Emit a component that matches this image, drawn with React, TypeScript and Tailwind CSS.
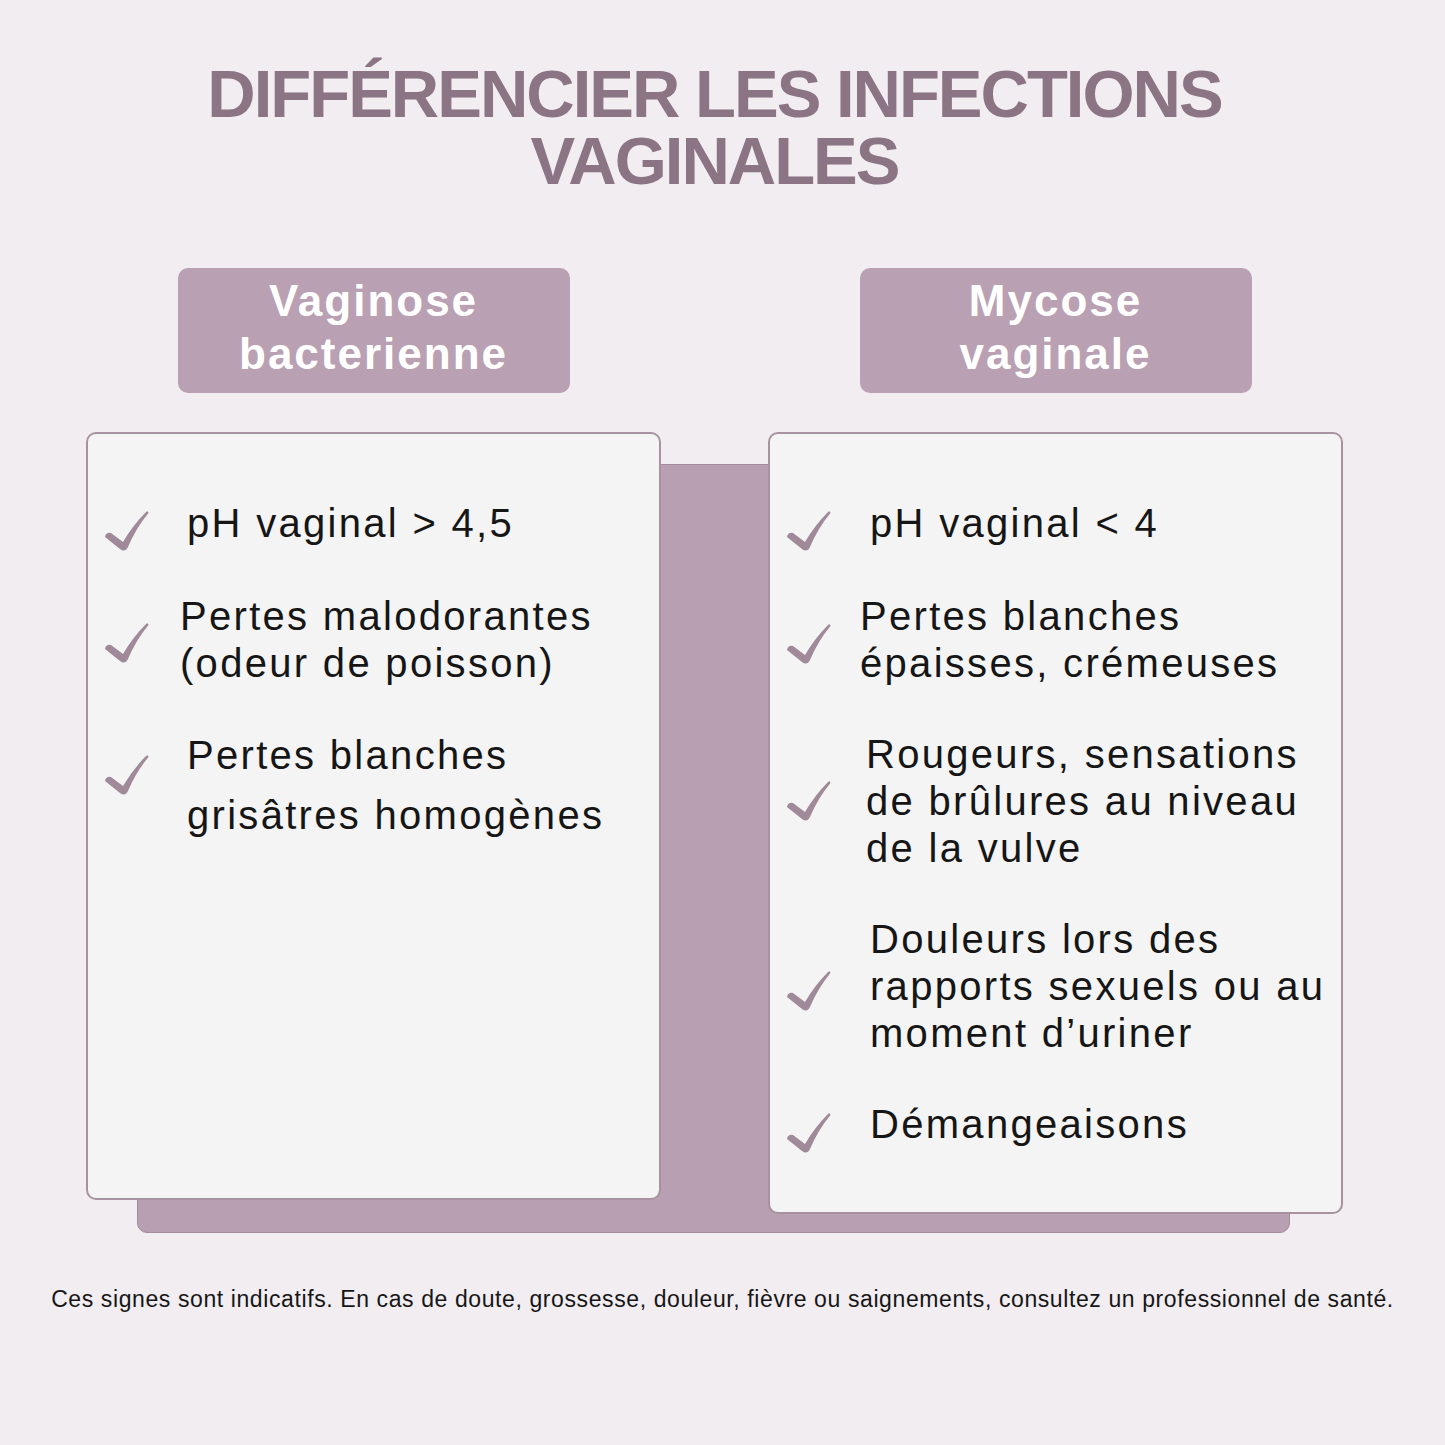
import React from "react";

/* ---------------- DATA ---------------- */

type Item = { lines: string[]; pl: string; mt: string; lh: string; ct: string };

const left: Item[] = [
  { lines: ["pH vaginal > 4,5"], pl: "pl-[99px]", mt: "mt-[65px]", lh: "leading-[47px]", ct: "top-[9px]" },
  { lines: ["Pertes malodorantes", "(odeur de poisson)"], pl: "pl-[92px]", mt: "mt-[46px]", lh: "leading-[47px]", ct: "top-[28px]" },
  { lines: ["Pertes blanches", "grisâtres homogènes"], pl: "pl-[99px]", mt: "mt-[38px]", lh: "leading-[60px]", ct: "top-[28px]" },
];

const right: Item[] = [
  { lines: ["pH vaginal < 4"], pl: "pl-[100px]", mt: "mt-[65px]", lh: "leading-[47px]", ct: "top-[9px]" },
  { lines: ["Pertes blanches", "épaisses, crémeuses"], pl: "pl-[90px]", mt: "mt-[46px]", lh: "leading-[47px]", ct: "top-[29px]" },
  { lines: ["Rougeurs, sensations", "de brûlures au niveau", "de la vulve"], pl: "pl-[96px]", mt: "mt-[44px]", lh: "leading-[47px]", ct: "top-[48px]" },
  { lines: ["Douleurs lors des", "rapports sexuels ou au", "moment d’uriner"], pl: "pl-[100px]", mt: "mt-[44px]", lh: "leading-[47px]", ct: "top-[53px]" },
  { lines: ["Démangeaisons"], pl: "pl-[100px]", mt: "mt-[44px]", lh: "leading-[47px]", ct: "top-[10px]" },
];

/* ---------------- PARTS ---------------- */

const Check = () => (
  <svg width="46" height="42" viewBox="0 0 44 42">
    <path
      d="M0 28 Q1 23 6 24 L18 33 Q28 16 41 3 Q43 1 43.5 4 Q31 19 23 38 Q20 44 15 40 Z"
      fill="#a08a99"
    />
  </svg>
);

const Row = ({ item }: { item: Item }) => (
  <div className={`relative ${item.mt} ${item.pl}`}>
    <div className={`absolute left-[16px] ${item.ct}`}>
      <Check />
    </div>
    <p className={`text-[40px] ${item.lh} tracking-[2.3px] text-[#161616]`}>
      {item.lines.map((l, i) => (
        <span key={i} className="block">
          {l}
        </span>
      ))}
    </p>
  </div>
);

const Pill = ({ a, b }: { a: string; b: string }) => (
  <div className="mx-auto w-[392px] h-[125px] pb-[8px] rounded-[10px] bg-[#b9a0b3] flex flex-col items-center justify-center text-white font-bold text-[44px] leading-[53px] tracking-[2px]">
    <span>{a}</span>
    <span>{b}</span>
  </div>
);

/* ---------------- COMPONENT ---------------- */

export default function App() {
  return (
    <div
      className="w-[1445px] h-[1445px] bg-[#f1edf1] overflow-hidden"
      style={{ fontFamily: "'Liberation Sans', Arial, sans-serif" }}
    >
      <div className="ml-[86px] w-[1257px]">
        {/* TITLE */}
        <h1 className="pt-[60px] text-center text-[#8b7484] font-bold text-[67px] leading-[67px] tracking-[-2px]">
          <span className="block">DIFFÉRENCIER LES INFECTIONS</span>
          <span className="block">VAGINALES</span>
        </h1>

        {/* PILLS */}
        <div className="mt-[74px] grid grid-cols-[575px_575px] gap-x-[107px]">
          <Pill a="Vaginose" b="bacterienne" />
          <Pill a="Mycose" b="vaginale" />
        </div>

        {/* CARDS */}
        <div className="relative mt-[39px] grid grid-cols-[575px_575px] gap-x-[107px] items-start">
          <div className="absolute left-[51px] right-[53px] top-[32px] bottom-[-19px] rounded-[10px] bg-[#b99fb2] border border-[#a48c9d]" />

          <div className="relative h-[768px] rounded-[10px] border-2 border-[#a8929f] bg-[#f4f4f4] pt-px">
            {left.map((it, i) => (
              <Row key={i} item={it} />
            ))}
          </div>

          <div className="relative h-[782px] rounded-[10px] border-2 border-[#a8929f] bg-[#f4f4f4] pt-px">
            {right.map((it, i) => (
              <Row key={i} item={it} />
            ))}
          </div>
        </div>
      </div>

      {/* FOOTNOTE */}
      <p className="mt-[71px] text-center text-[23px] leading-[28px] text-[#161616] tracking-[0.6px]">
        Ces signes sont indicatifs. En cas de doute, grossesse, douleur, fièvre ou saignements, consultez un professionnel de santé.
      </p>
    </div>
  );
}
